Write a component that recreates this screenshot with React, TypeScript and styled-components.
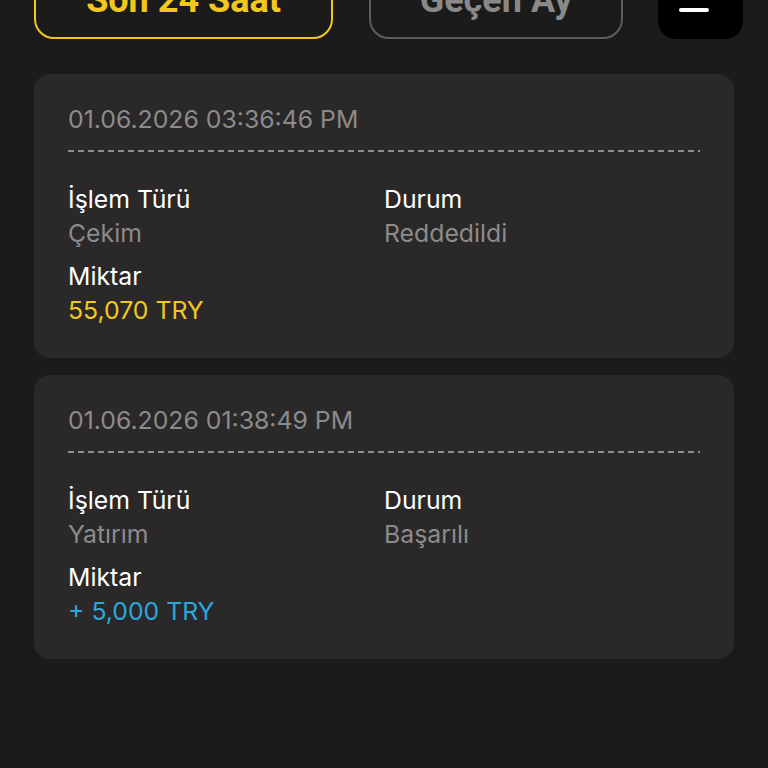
import React from "react";
import styled, { createGlobalStyle } from "styled-components";

const Global = createGlobalStyle`
  html, body { margin: 0; padding: 0; background: #1c1b1b; }
  body { font-family: Inter, "Noto Sans", sans-serif; color: #fff; overflow: hidden; }
`;

const Page = styled.div`
  padding: 0 34px;
  display: flex;
  flex-direction: column;
  gap: 35px;
`;

const Toolbar = styled.div`
  margin-top: -35px;
  display: flex;
  height: 74px;
`;

const FilterButton = styled.button<{ $active?: boolean; $w: number; $gap: number }>`
  flex: 0 0 auto;
  width: ${(p) => p.$w}px;
  margin-right: ${(p) => p.$gap}px;
  height: 74px;
  box-sizing: border-box;
  border-radius: 20px;
  background: transparent;
  border: 2px solid ${(p) => (p.$active ? "#f2c81f" : "#5e5d5d")};
  color: ${(p) => (p.$active ? "#f2c81f" : "#8a8989")};
  font-family: Roboto, Inter, sans-serif;
  font-weight: 700;
  font-size: 36px;
  line-height: 40px;
  padding: 0 0 4px;
`;

const MenuButton = styled.button`
  flex: 0 0 auto;
  width: 85px;
  height: 74px;
  border: none;
  border-radius: 18px;
  background: #000;
  display: flex;
  align-items: flex-end;
  justify-content: flex-start;
  padding: 0 0 27px 21px;
  box-sizing: border-box;
`;

const List = styled.div`
  display: flex;
  flex-direction: column;
  gap: 17px;
`;

const Card = styled.div`
  background: #2a2829;
  border-radius: 16px;
  padding: 29px 34px 31px;
  display: flex;
  flex-direction: column;
`;

const DateText = styled.div`
  font-size: 24.8px;
  line-height: 32px;
  color: #8c8b8b;
`;

const Dashed = styled.div`
  margin-top: 15px;
  height: 2px;
  background-image: repeating-linear-gradient(
    to right,
    #8f8e8e 0 6px,
    transparent 6px 10px
  );
`;

const Grid = styled.div`
  margin-top: 30px;
  display: grid;
  grid-template-columns: 1fr 1fr;
  row-gap: 9px;
`;

const Field = styled.div`
  display: flex;
  flex-direction: column;
`;

const Label = styled.div`
  font-size: 24.8px;
  line-height: 34px;
  color: #fff;
`;

const Value = styled.div<{ $tone?: "gray" | "yellow" | "blue" }>`
  font-size: 24.8px;
  line-height: 34px;
  color: ${(p) =>
    p.$tone === "yellow" ? "#f2c81f" : p.$tone === "blue" ? "#2aa8dd" : "#8c8b8b"};
`;

type Tx = {
  date: string;
  type: string;
  status: string;
  amount: string;
  tone: "yellow" | "blue";
};

const data: Tx[] = [
  { date: "01.06.2026 03:36:46 PM", type: "Çekim", status: "Reddedildi", amount: "55,070 TRY", tone: "yellow" },
  { date: "01.06.2026 01:38:49 PM", type: "Yatırım", status: "Başarılı", amount: "+ 5,000 TRY", tone: "blue" },
];

export default function App() {
  return (
    <>
      <Global />
      <Page>
        <Toolbar>
          <FilterButton $active $w={299} $gap={36}>Son 24 Saat</FilterButton>
          <FilterButton $w={254} $gap={35}>Geçen Ay</FilterButton>
          <MenuButton aria-label="menu">
            <svg width="30" height="28" viewBox="0 0 30 28">
              <rect x="0" y="0" width="30" height="4" rx="2" fill="#fff" />
              <rect x="0" y="12" width="30" height="4" rx="2" fill="#fff" />
              <rect x="0" y="24" width="30" height="4" rx="2" fill="#fff" />
            </svg>
          </MenuButton>
        </Toolbar>
        <List>
          {data.map((t) => (
            <Card key={t.date}>
              <DateText>{t.date}</DateText>
              <Dashed />
              <Grid>
                <Field>
                  <Label>İşlem Türü</Label>
                  <Value>{t.type}</Value>
                </Field>
                <Field>
                  <Label>Durum</Label>
                  <Value>{t.status}</Value>
                </Field>
                <Field>
                  <Label>Miktar</Label>
                  <Value $tone={t.tone}>{t.amount}</Value>
                </Field>
              </Grid>
            </Card>
          ))}
        </List>
      </Page>
    </>
  );
}
